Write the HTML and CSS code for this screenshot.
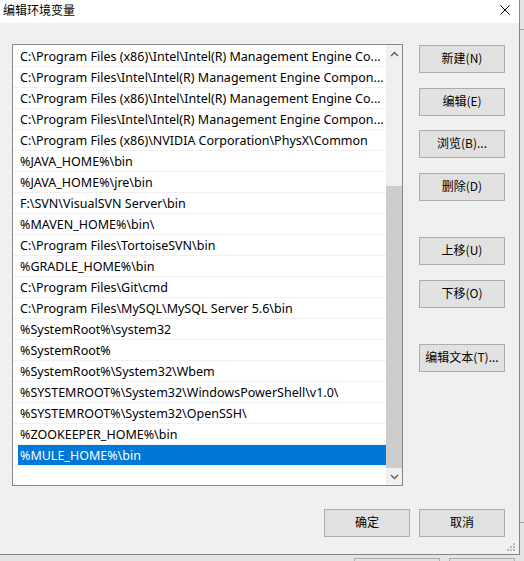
FILE: index.html
```html
<!DOCTYPE html>
<html>
<head>
<meta charset="utf-8">
<link rel="stylesheet" href="styles.css">
</head>
<body>
<div class="desktop">
  <div class="top-row">
    <div class="dialog">
      <div class="titlebar">
        <span class="title">编辑环境变量</span>
        <svg class="close" width="10" height="10" viewBox="0 0 10 10"><path d="M0.5 0.5 L9.5 9.5 M9.5 0.5 L0.5 9.5" stroke="#000" stroke-width="1" fill="none"/></svg>
      </div>
      <div class="main">
        <div class="list">
          <div class="rows">
            <div class="row"><div class="cell">C:\Program Files (x86)\Intel\Intel(R) Management Engine Co...</div></div>
            <div class="row"><div class="cell">C:\Program Files\Intel\Intel(R) Management Engine Compon...</div></div>
            <div class="row"><div class="cell">C:\Program Files (x86)\Intel\Intel(R) Management Engine Co...</div></div>
            <div class="row"><div class="cell">C:\Program Files\Intel\Intel(R) Management Engine Compon...</div></div>
            <div class="row"><div class="cell">C:\Program Files (x86)\NVIDIA Corporation\PhysX\Common</div></div>
            <div class="row"><div class="cell">%JAVA_HOME%\bin</div></div>
            <div class="row"><div class="cell">%JAVA_HOME%\jre\bin</div></div>
            <div class="row"><div class="cell">F:\SVN\VisualSVN Server\bin</div></div>
            <div class="row"><div class="cell">%MAVEN_HOME%\bin\</div></div>
            <div class="row"><div class="cell">C:\Program Files\TortoiseSVN\bin</div></div>
            <div class="row"><div class="cell">%GRADLE_HOME%\bin</div></div>
            <div class="row"><div class="cell">C:\Program Files\Git\cmd</div></div>
            <div class="row"><div class="cell">C:\Program Files\MySQL\MySQL Server 5.6\bin</div></div>
            <div class="row"><div class="cell">%SystemRoot%\system32</div></div>
            <div class="row"><div class="cell">%SystemRoot%</div></div>
            <div class="row"><div class="cell">%SystemRoot%\System32\Wbem</div></div>
            <div class="row"><div class="cell">%SYSTEMROOT%\System32\WindowsPowerShell\v1.0\</div></div>
            <div class="row"><div class="cell">%SYSTEMROOT%\System32\OpenSSH\</div></div>
            <div class="row"><div class="cell">%ZOOKEEPER_HOME%\bin</div></div>
            <div class="row selected"><div class="cell">%MULE_HOME%\bin</div></div>
          </div>
          <div class="scrollbar">
            <div class="arrow"><svg width="9" height="6" viewBox="0 0 9 6"><path d="M1 5 L4.5 1.5 L8 5" stroke="#606060" stroke-width="1.5" fill="none"/></svg></div>
            <div class="track-space"></div>
            <div class="thumb"></div>
            <div class="arrow"><svg width="9" height="6" viewBox="0 0 9 6"><path d="M1 1 L4.5 4.5 L8 1" stroke="#606060" stroke-width="1.5" fill="none"/></svg></div>
          </div>
        </div>
        <div class="side">
          <div class="btn">新建(N)</div>
          <div class="btn g14">编辑(E)</div>
          <div class="btn g13">浏览(B)...</div>
          <div class="btn g14">删除(D)</div>
          <div class="btn g36">上移(U)</div>
          <div class="btn g14">下移(O)</div>
          <div class="btn g36">编辑文本(T)...</div>
        </div>
      </div>
      <div class="footer">
        <div class="btn">确定</div>
        <div class="btn">取消</div>
      </div>
      <svg class="grip" width="9" height="9" viewBox="0 0 9 9" fill="#b8b8b8">
        <rect x="6" y="0" width="2" height="2"/>
        <rect x="3" y="3" width="2" height="2"/><rect x="6" y="3" width="2" height="2"/>
        <rect x="0" y="6" width="2" height="2"/><rect x="3" y="6" width="2" height="2"/><rect x="6" y="6" width="2" height="2"/>
      </svg>
    </div>
    <div class="right-strip">
      <div class="rs-line l1"></div>
      <div class="rs-line l2"></div>
    </div>
  </div>
  <div class="bottom-strip">
    <div class="bg-btn b1"></div>
    <div class="bg-btn b2"></div>
  </div>
</div>
</body>
</html>
```
FILE: styles.css
```css
* { box-sizing: border-box; }
html, body {
  margin: 0;
  padding: 0;
}
body {
  width: 524px;
  height: 561px;
  overflow: hidden;
  background: #e9e9e9;
  font-family: "Noto Sans", "Noto Sans CJK SC", sans-serif;
  font-size: 12px;
  color: #000;
}
.desktop {
  display: flex;
  flex-direction: column;
  width: 524px;
  height: 561px;
}
.top-row {
  display: flex;
  height: 555px;
}
.dialog {
  position: relative;
  width: 520px;
  height: 555px;
  background: #f0f0f0;
  border-right: 1px solid #858585;
  border-bottom: 1px solid #858585;
  display: flex;
  flex-direction: column;
}
.titlebar {
  height: 23px;
  background: #fff;
  display: flex;
  align-items: center;
  justify-content: space-between;
  padding: 0 9px 3px 3px;
}
.title {
  font-family: "Noto Sans CJK SC", sans-serif;
  font-size: 12px;
  line-height: 16px;
  color: #000;
}
.close { display: block; margin-top: 0; }
.main {
  display: flex;
  padding: 21px 14px 0 12px;
}
.list {
  width: 391px;
  height: 442px;
  border: 1px solid #828790;
  background: #fff;
  display: flex;
}
.rows {
  flex: 1;
  min-width: 0;
  padding-top: 1px;
  overflow: hidden;
}
.row {
  height: 21px;
  border-bottom: 1px solid #f0f0f0;
  padding-left: 5px;
}
.cell {
  height: 20px;
  line-height: 21px;
  font-size: 12.5px;
  padding-left: 2px;
  white-space: nowrap;
  overflow: hidden;
  color: #000;
}
.row.selected .cell {
  background: #0078d7;
  color: #fff;
}
.scrollbar {
  width: 16px;
  background: #f0f0f0;
  display: flex;
  flex-direction: column;
}
.arrow {
  height: 17px;
  display: flex;
  align-items: center;
  justify-content: center;
}
.arrow svg { display: block; }
.track-space { height: 124px; }
.thumb {
  flex: 1;
  background: #cdcdcd;
}
.side {
  margin-left: 16px;
  display: flex;
  flex-direction: column;
  padding-top: 1px;
}
.btn {
  width: 86px;
  height: 28px;
  border: 1px solid #adadad;
  background: #e1e1e1;
  display: flex;
  align-items: center;
  justify-content: center;
  padding-bottom: 3px;
  font-family: "Noto Sans CJK SC", sans-serif;
  font-size: 12px;
  color: #000;
  white-space: nowrap;
}
.g14 { margin-top: 15px; }
.g13 { margin-top: 14px; }
.g36 { margin-top: 36px; }
.footer {
  display: flex;
  justify-content: flex-end;
  gap: 9px;
  padding: 23px 14px 0 0;
}
.grip {
  position: absolute;
  right: 3px;
  bottom: 2px;
}
.right-strip {
  flex: 1;
  position: relative;
  background: #e4e4e4;
  display: flex;
  flex-direction: column;
}
.rs-line {
  height: 1px;
  background: #a0a0a0;
}
.l1 { margin-top: 29px; }
.l2 { margin-top: 492px; }
.bottom-strip {
  flex: 1;
  display: flex;
  background: #e4e4e4;
  padding-top: 3px;
}
.bg-btn {
  height: 10px;
  border: 1px solid #adadad;
  border-bottom: none;
  background: #e1e1e1;
}
.b1 { width: 86px; margin-left: 354px; }
.b2 { width: 66px; margin-left: 9px; }
```
